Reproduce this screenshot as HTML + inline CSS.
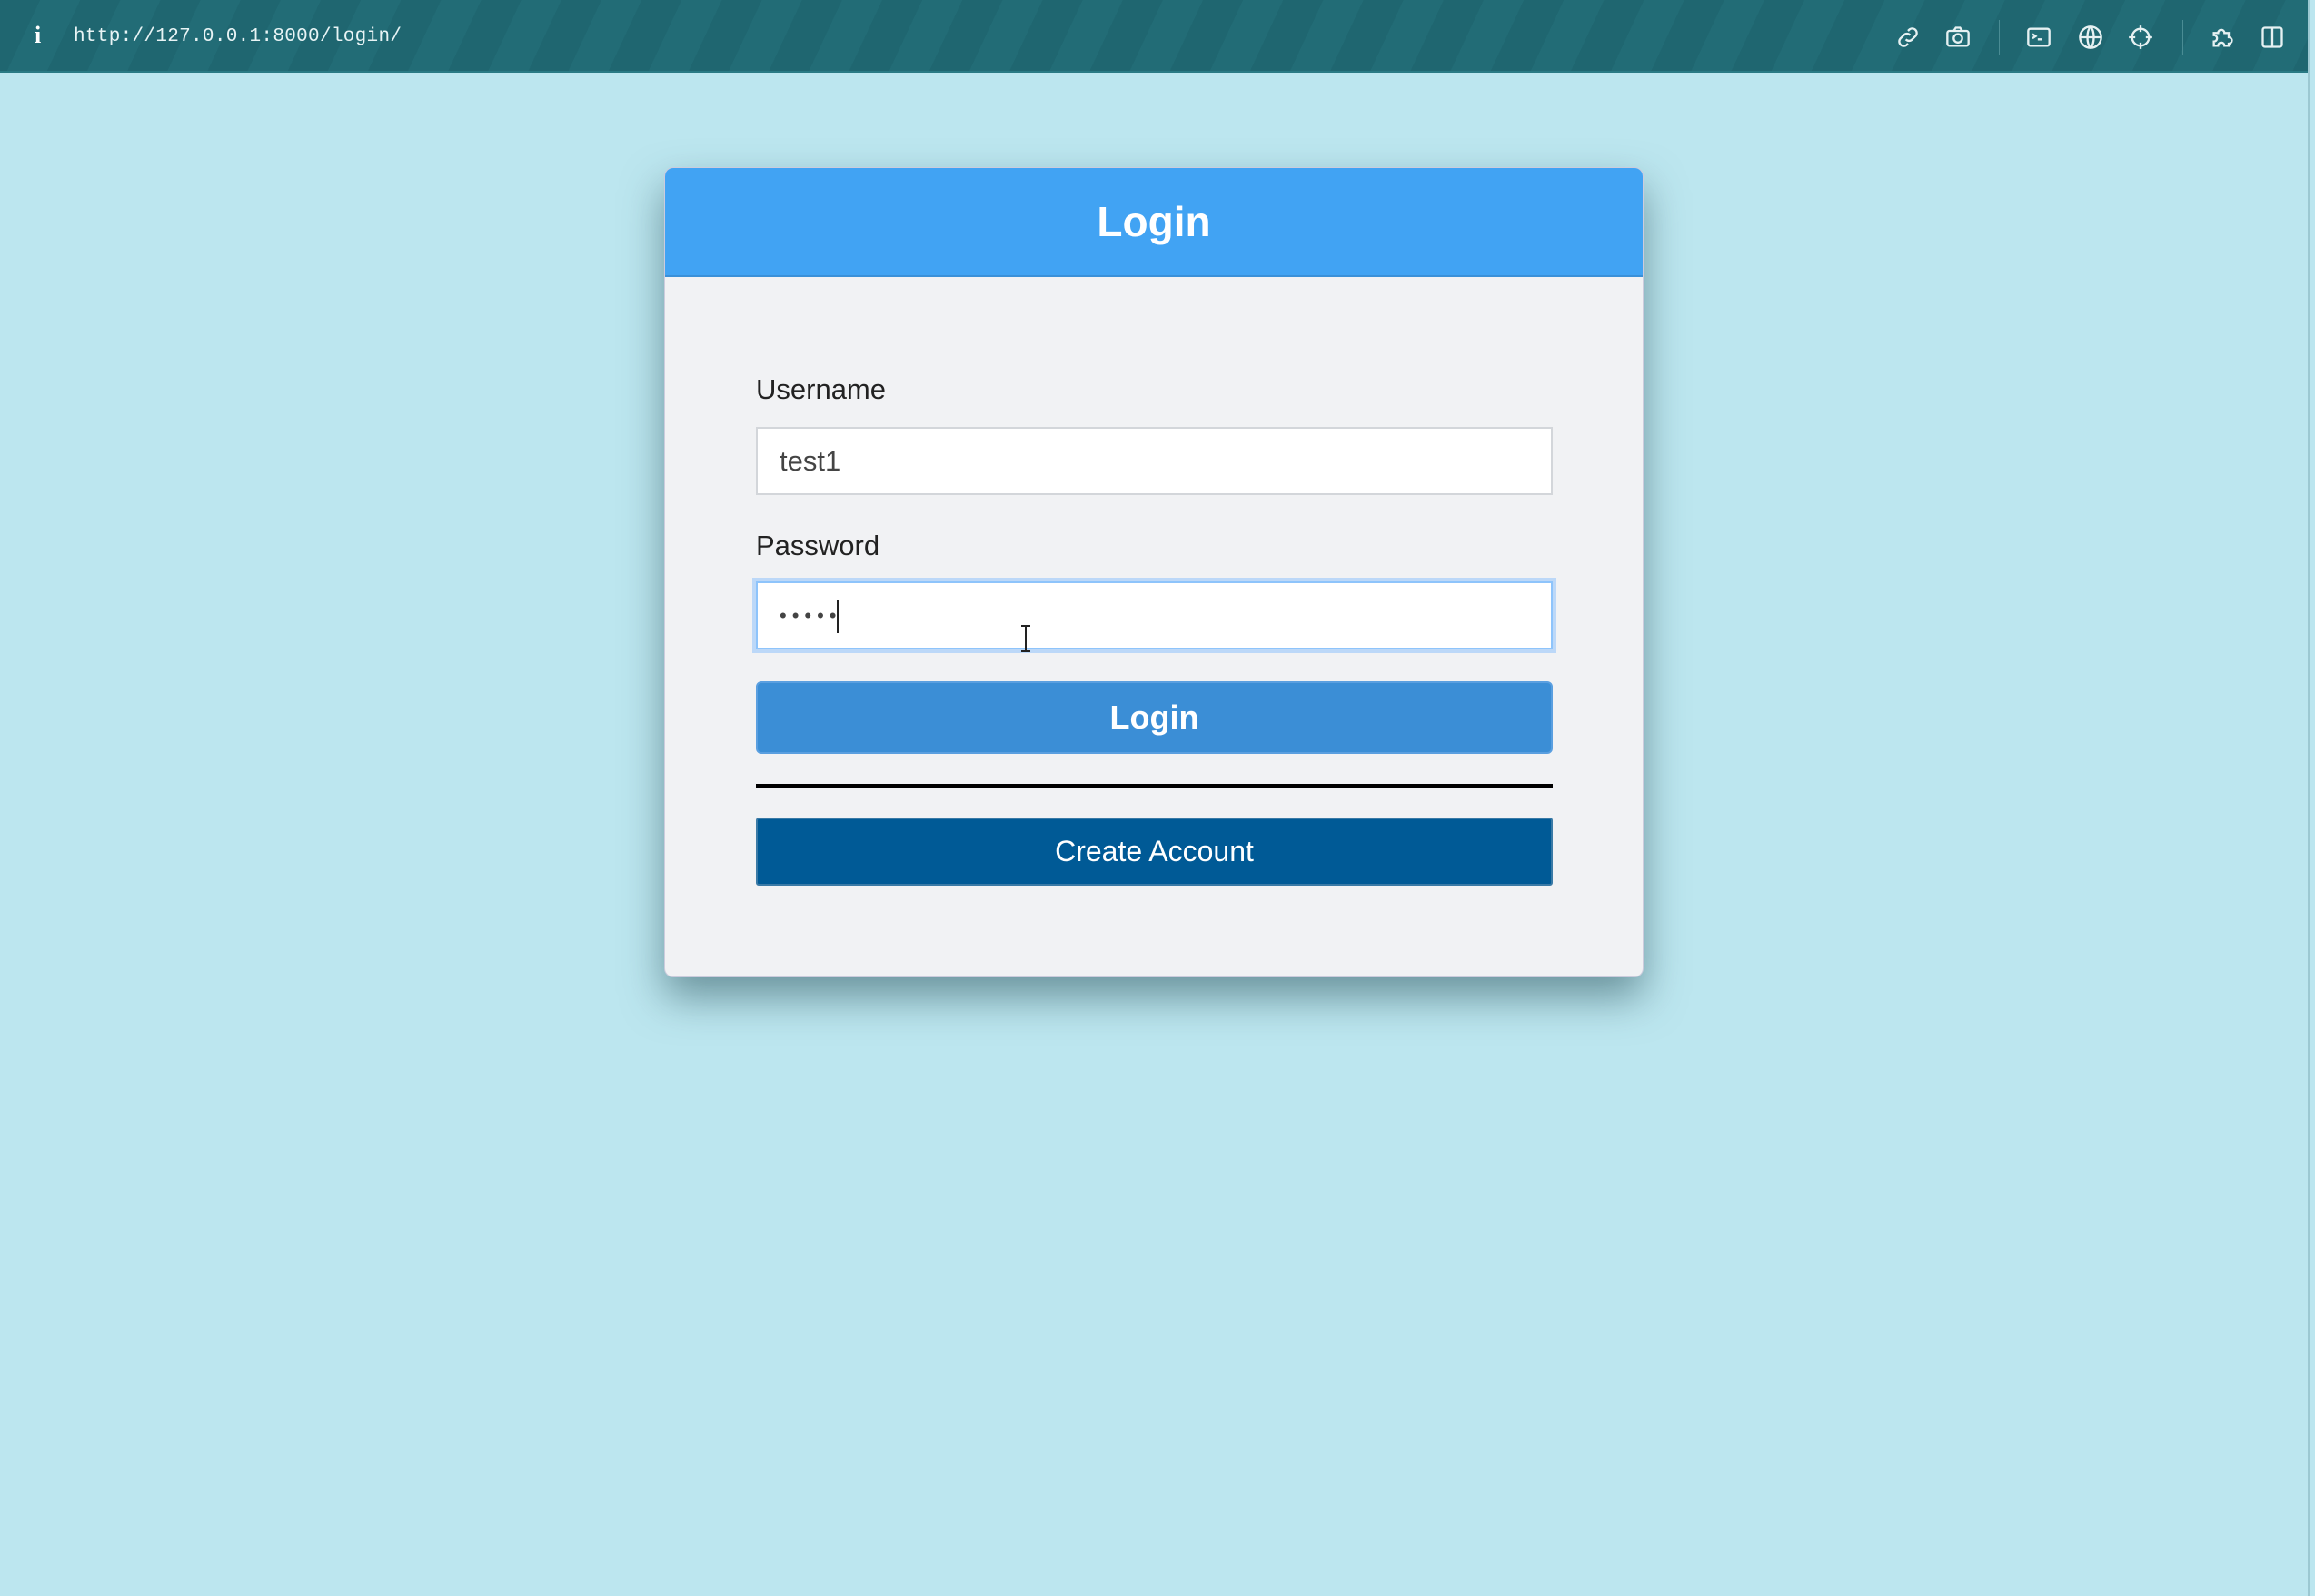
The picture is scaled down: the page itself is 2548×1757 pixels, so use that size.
<!DOCTYPE html>
<html><head><meta charset="utf-8"><style>
*{box-sizing:border-box;margin:0;padding:0}
body{width:2548px;height:1757px;background:#bce6ef;font-family:"Liberation Sans",sans-serif;position:relative;overflow:hidden}
.bar{position:absolute;left:0;top:0;width:2540px;height:80px;background:repeating-linear-gradient(115deg,#1f6670 0 40px,#226c76 40px 80px);border-bottom:2px solid #2a7a84}
.edge{position:absolute;right:0;top:0;width:8px;height:1757px;background:#bce6ef;border-left:2px solid #9cc8d2}
.url{position:absolute;left:81px;top:29px;color:#e8f4f5;font-family:"Liberation Mono",monospace;font-size:21px;letter-spacing:0.3px}
.info{position:absolute;left:38px;top:24px;color:#fff;font:bold 26px "Liberation Serif",serif}
.ic{position:absolute;top:27px;width:28px;height:28px}
.ic svg{width:28px;height:28px;fill:none;stroke:#e6f1f2;stroke-width:2}
.sep{position:absolute;top:22px;width:1px;height:38px;background:#4a8c94}
.card{position:absolute;left:731px;top:184px;width:1078px;height:892px;background:#f1f2f4;border-radius:10px;box-shadow:0 22px 45px rgba(40,80,90,.55);overflow:hidden;border:1px solid #ccd}
.head{height:120px;background:#41a3f3;color:#fff;font-weight:bold;font-size:46px;text-align:center;line-height:118px;border-bottom:2px solid #3a90d8}
.lbl{position:absolute;left:100px;font-size:31px;color:#222}
.in{position:absolute;left:100px;width:877px;height:75px;background:#fff;border:2px solid #d3d6da;font-size:31px;color:#444;padding-left:24px;line-height:71px}
.btn{position:absolute;left:100px;width:877px;color:#fff;text-align:center}
</style></head><body>
<div class="bar"></div>
<div class="info">i</div>
<div class="url">http://127.0.0.1:8000/login/</div>
<div class="ic" style="left:2086px"><svg viewBox="0 0 24 24"><path d="M10 14a4 4 0 0 0 6 0l3-3a4 4 0 0 0-6-6l-1 1M14 10a4 4 0 0 0-6 0l-3 3a4 4 0 0 0 6 6l1-1"/></svg></div>
<div class="ic" style="left:2141px"><svg viewBox="0 0 24 24"><rect x="2" y="6" width="20" height="14" rx="2"/><path d="M8 6l2-3h4l2 3"/><circle cx="12" cy="13" r="4"/></svg></div>
<div class="sep" style="left:2200px"></div>
<div class="ic" style="left:2230px"><svg viewBox="0 0 24 24"><rect x="2" y="4" width="20" height="16" rx="2"/><path d="M6 9l3 2-3 2M11 14h4"/></svg></div>
<div class="ic" style="left:2287px"><svg viewBox="0 0 24 24"><circle cx="12" cy="12" r="10"/><path d="M2 12h20M12 2c4 4 4 16 0 20M12 2c-4 4-4 16 0 20"/></svg></div>
<div class="ic" style="left:2342px"><svg viewBox="0 0 24 24"><circle cx="12" cy="12" r="8"/><path d="M12 1v6M12 17v6M1 12h6M17 12h6"/></svg></div>
<div class="sep" style="left:2402px"></div>
<div class="ic" style="left:2432px"><svg viewBox="0 0 24 24"><path d="M4 8h4a3 3 0 1 1 6 0h4v4a3 3 0 1 1 0 6v2H14a3 3 0 1 0-6 0H4v-4a3 3 0 1 0 0-6z"/></svg></div>
<div class="ic" style="left:2487px"><svg viewBox="0 0 24 24"><rect x="3" y="3" width="18" height="18" rx="2"/><path d="M12 3v18"/></svg></div>
<div class="edge"></div>
<div class="card">
<div class="head">Login</div>
<div class="lbl" style="top:226px">Username</div>
<div class="in" style="top:285px">test1</div>
<div class="lbl" style="top:398px">Password</div>
<div class="in" style="top:455px;border-color:#8ec4fb;box-shadow:0 0 0 4px #bcd8f8;letter-spacing:6px;font-size:22px">•••••<span style="display:inline-block;width:2px;height:36px;background:#222;vertical-align:middle;margin-left:-6px"></span></div>
<svg style="position:absolute;left:390px;top:503px" width="14" height="30" viewBox="0 0 14 30"><path d="M2 1h10M7 1v28M2 29h10" stroke="#222" stroke-width="2" fill="none"/></svg>
<div class="btn" style="top:565px;height:80px;background:#3b8ed6;border:2px solid #5a9fe0;border-radius:6px;font-weight:bold;font-size:36px;line-height:76px">Login</div>
<div style="position:absolute;left:100px;top:678px;width:877px;height:4px;background:#000"></div>
<div class="btn" style="top:715px;height:75px;background:#005a96;border:2px solid #3a7aa6;border-radius:3px;font-size:32px;line-height:71px">Create Account</div>
</div>
</body></html>
